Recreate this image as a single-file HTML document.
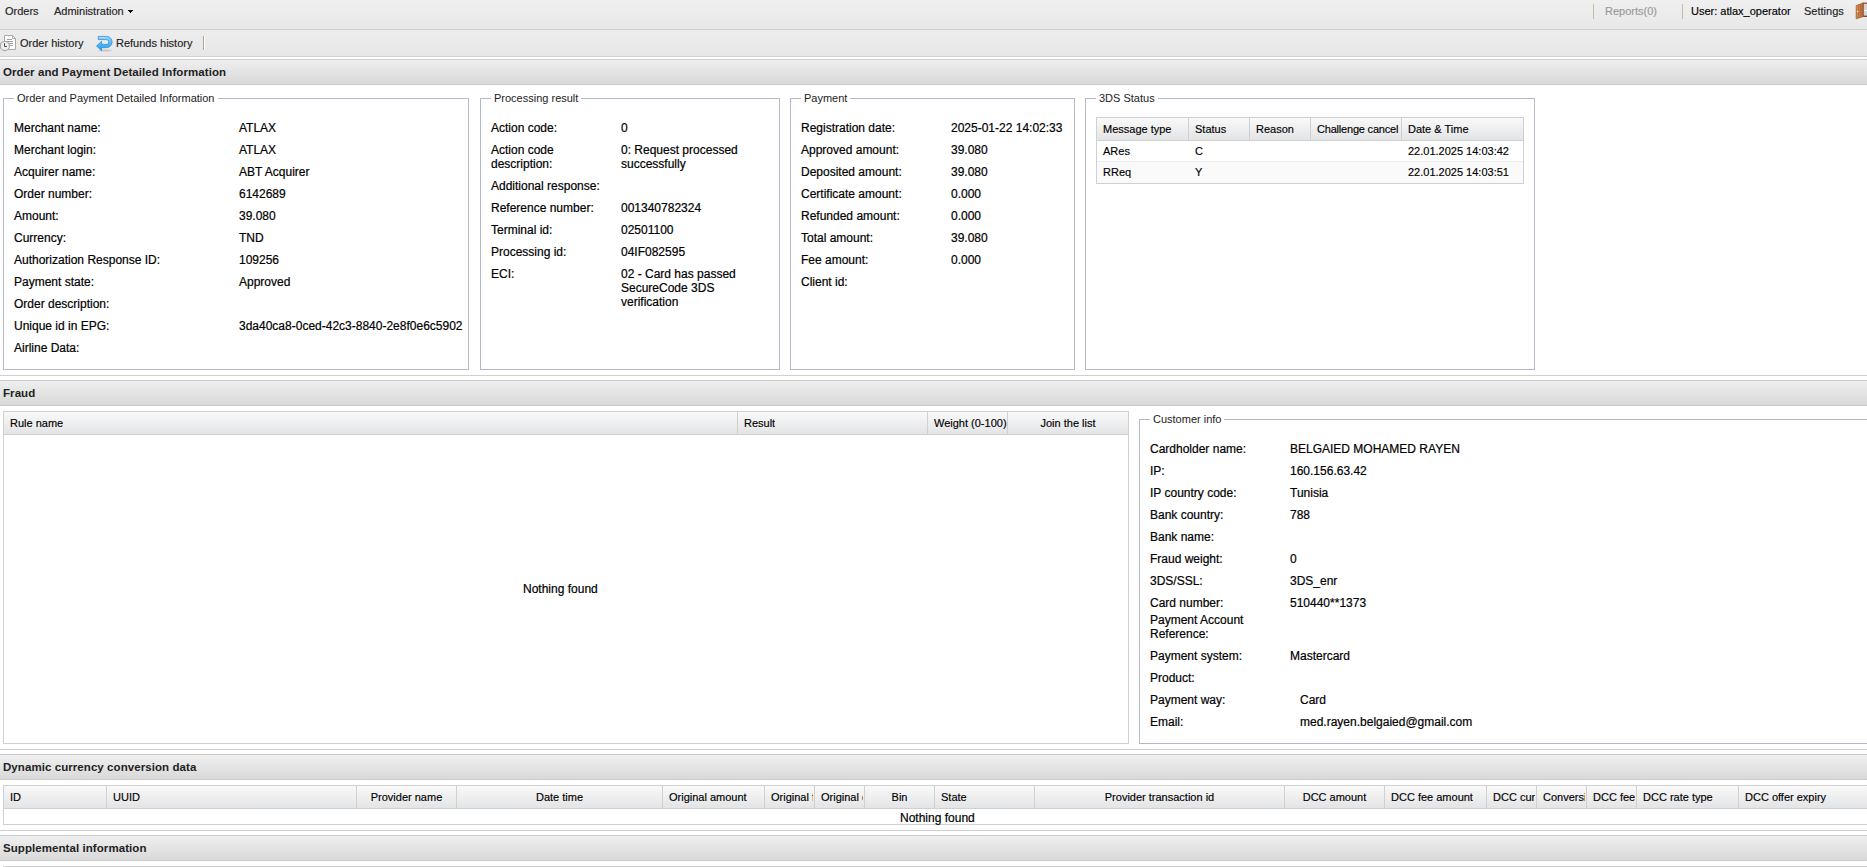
<!DOCTYPE html><html><head><meta charset="utf-8"><title>Order</title><style>
*{margin:0;padding:0;box-sizing:border-box}
html,body{width:1867px;height:867px;overflow:hidden;background:#fff;font-family:"Liberation Sans",sans-serif;color:#000}
.a{position:absolute}
.t11,.t12,.tb,.lg,.gh,.gc{position:absolute;white-space:nowrap;line-height:14px}
.t11{font-size:11px;-webkit-text-stroke:0.15px currentColor}
.t12{font-size:12px;-webkit-text-stroke:0.2px #000}
.tb{font-size:11.5px;font-weight:bold;color:#222;letter-spacing:0.07px}
.lg{font-size:11px;color:#15428b;color:#222;background:#fff;padding:0 3px}
.gh{font-size:11px;color:#000;overflow:hidden;-webkit-text-stroke:0.15px #000}
.gc{font-size:11px;color:#000;-webkit-text-stroke:0.15px #000}
.fs{position:absolute;border:1px solid #b5b8c8}
.ph{position:absolute;left:0;width:1867px;height:26px;border-top:1px solid #cbcbcb;border-bottom:1px solid #cbcbcb;background:linear-gradient(#efefef,#d9d9d9)}
.hl{position:absolute;left:0;width:1867px;height:1px;background:#d0d0d0}
.grid{position:absolute;border:1px solid #d0d0d0;background:#fff}
.ghd{position:absolute;background:linear-gradient(#f9f9f9,#e3e4e6);border-bottom:1px solid #d0d0d0}
.sep{position:absolute;width:1px;background:#d0d0d0}
</style></head><body>
<div class="a" style="left:0px;top:0px;width:1867px;height:29px;background:linear-gradient(#efefef,#e8e8e8)"></div>
<div class="a" style="left:0px;top:29px;width:1867px;height:1px;background:#d0d0d0"></div>
<div class="t11" style="left:5px;top:4px;color:#222">Orders</div>
<div class="t11" style="left:54px;top:4px;color:#222">Administration</div>
<svg class="a" style="left:128px;top:10px" width="5" height="3" shape-rendering="crispEdges"><rect x="0" y="0" width="5" height="1" fill="#000"/><rect x="1" y="1" width="3" height="1" fill="#000"/><rect x="2" y="2" width="1" height="1" fill="#000"/></svg>
<div class="a" style="left:1593px;top:4px;width:1px;height:15px;background:#c4bca8"></div>
<div class="t11" style="left:1605px;top:4px;color:#999">Reports(0)</div>
<div class="a" style="left:1682px;top:4px;width:1px;height:15px;background:#c4bca8"></div>
<div class="t11" style="left:1691px;top:4px;color:#000">User: atlax_operator</div>
<div class="t11" style="left:1804px;top:4px;color:#222">Settings</div>
<svg class="a" style="left:1855px;top:0px" width="12" height="22" viewBox="0 0 12 22">
<defs><linearGradient id="dg" x1="0" y1="0" x2="1" y2="0"><stop offset="0" stop-color="#d98f52"/><stop offset="1" stop-color="#b86a34"/></linearGradient></defs>
<rect x="7.5" y="2.6" width="5" height="14.4" fill="#8e4424"/>
<rect x="8.5" y="3.8" width="4" height="11.8" fill="#cfd4d9"/>
<rect x="9.6" y="9.8" width="3" height="1.3" fill="#fff"/>
<path d="M1.2,5.6 L8.2,3 V16.6 L1.2,18.8 Z" fill="url(#dg)" stroke="#97502a" stroke-width="0.7"/>
<path d="M3.5,5.5V17.5 M5.8,4.7V16.9" stroke="#b0622e" stroke-width="0.6"/>
<circle cx="2.7" cy="11.5" r="0.8" fill="#e8e8e8"/>
</svg>
<div class="a" style="left:0px;top:30px;width:1867px;height:26px;background:linear-gradient(#ededed,#e7e7e7)"></div>
<div class="a" style="left:0px;top:56px;width:1867px;height:1px;background:#cfcfcf"></div>
<svg class="a" style="left:0px;top:34px" width="17" height="18" viewBox="0 0 17 18">
<path d="M4.5,1.5 H12.5 L15.5,4.5 V15.5 H4.5 Z" fill="#fff" stroke="#a8a8a8" stroke-width="1"/>
<path d="M12.5,1.5 V4.5 H15.5" fill="none" stroke="#a8a8a8" stroke-width="1"/>
<path d="M7,5.5H12 M7,7.5H13 M9,9.5H13 M10,11.5H13" stroke="#a0a0a0" stroke-width="1"/>
<circle cx="4.9" cy="11.9" r="4.6" fill="#efefef" stroke="#ababab" stroke-width="1.3"/>
<path d="M4.5,9.3V12.5H6.8" fill="none" stroke="#444" stroke-width="1"/>
</svg>
<div class="t11" style="left:20px;top:36px;color:#222">Order history</div>
<svg class="a" style="left:93px;top:32px" width="24" height="24" viewBox="0 0 24 24">
<defs><linearGradient id="rg" x1="0" y1="0" x2="0" y2="1"><stop offset="0" stop-color="#8cd8ff"/><stop offset="1" stop-color="#12a0f0"/></linearGradient></defs>
<ellipse cx="12" cy="18.5" rx="7" ry="1.2" fill="#000" opacity="0.12"/>
<path d="M5.3,4.4 H13.5 A5.6,5.6 0 0 1 13.5,15.6 H8.6 V18.6 L3.5,14 L8.6,9.3 V12.4 H13.5 A2.4,2.4 0 0 0 13.5,7.6 H5.3 Z" fill="url(#rg)" stroke="#2f86d6" stroke-width="0.75" stroke-linejoin="round"/><path d="M6,5.6H13" stroke="#b8ecff" stroke-width="1" opacity="0.7"/>
</svg>
<div class="t11" style="left:116px;top:36px;color:#222">Refunds history</div>
<div class="a" style="left:203px;top:36px;width:1px;height:14px;background:#aaa494"></div>
<div class="a" style="left:204px;top:36px;width:1px;height:14px;background:#fff"></div>
<div class="ph" style="top:59px"></div>
<div class="tb" style="left:3px;top:65px;">Order and Payment Detailed Information</div>
<div class="fs" style="left:3px;top:98px;width:466px;height:272px"></div>
<div class="lg" style="left:14px;top:91px;">Order and Payment Detailed Information</div>
<div class="t12" style="left:14px;top:121px;">Merchant name:</div>
<div class="t12" style="left:239px;top:121px;">ATLAX</div>
<div class="t12" style="left:14px;top:143px;">Merchant login:</div>
<div class="t12" style="left:239px;top:143px;">ATLAX</div>
<div class="t12" style="left:14px;top:165px;">Acquirer name:</div>
<div class="t12" style="left:239px;top:165px;">ABT Acquirer</div>
<div class="t12" style="left:14px;top:187px;">Order number:</div>
<div class="t12" style="left:239px;top:187px;">6142689</div>
<div class="t12" style="left:14px;top:209px;">Amount:</div>
<div class="t12" style="left:239px;top:209px;">39.080</div>
<div class="t12" style="left:14px;top:231px;">Currency:</div>
<div class="t12" style="left:239px;top:231px;">TND</div>
<div class="t12" style="left:14px;top:253px;">Authorization Response ID:</div>
<div class="t12" style="left:239px;top:253px;">109256</div>
<div class="t12" style="left:14px;top:275px;">Payment state:</div>
<div class="t12" style="left:239px;top:275px;">Approved</div>
<div class="t12" style="left:14px;top:297px;">Order description:</div>
<div class="t12" style="left:14px;top:319px;">Unique id in EPG:</div>
<div class="t12" style="left:239px;top:319px;">3da40ca8-0ced-42c3-8840-2e8f0e6c5902</div>
<div class="t12" style="left:14px;top:341px;">Airline Data:</div>
<div class="fs" style="left:480px;top:98px;width:300px;height:272px"></div>
<div class="lg" style="left:491px;top:91px;">Processing result</div>
<div class="t12" style="left:491px;top:121px;">Action code:</div>
<div class="t12" style="left:621px;top:121px;">0</div>
<div class="t12" style="left:491px;top:143px;">Action code</div>
<div class="t12" style="left:491px;top:157px;">description:</div>
<div class="t12" style="left:621px;top:143px;">0: Request processed</div>
<div class="t12" style="left:621px;top:157px;">successfully</div>
<div class="t12" style="left:491px;top:179px;">Additional response:</div>
<div class="t12" style="left:491px;top:201px;">Reference number:</div>
<div class="t12" style="left:621px;top:201px;">001340782324</div>
<div class="t12" style="left:491px;top:223px;">Terminal id:</div>
<div class="t12" style="left:621px;top:223px;">02501100</div>
<div class="t12" style="left:491px;top:245px;">Processing id:</div>
<div class="t12" style="left:621px;top:245px;">04IF082595</div>
<div class="t12" style="left:491px;top:267px;">ECI:</div>
<div class="t12" style="left:621px;top:267px;">02 - Card has passed</div>
<div class="t12" style="left:621px;top:281px;">SecureCode 3DS</div>
<div class="t12" style="left:621px;top:295px;">verification</div>
<div class="fs" style="left:790px;top:98px;width:285px;height:272px"></div>
<div class="lg" style="left:801px;top:91px;">Payment</div>
<div class="t12" style="left:801px;top:121px;">Registration date:</div>
<div class="t12" style="left:951px;top:121px;">2025-01-22 14:02:33</div>
<div class="t12" style="left:801px;top:143px;">Approved amount:</div>
<div class="t12" style="left:951px;top:143px;">39.080</div>
<div class="t12" style="left:801px;top:165px;">Deposited amount:</div>
<div class="t12" style="left:951px;top:165px;">39.080</div>
<div class="t12" style="left:801px;top:187px;">Certificate amount:</div>
<div class="t12" style="left:951px;top:187px;">0.000</div>
<div class="t12" style="left:801px;top:209px;">Refunded amount:</div>
<div class="t12" style="left:951px;top:209px;">0.000</div>
<div class="t12" style="left:801px;top:231px;">Total amount:</div>
<div class="t12" style="left:951px;top:231px;">39.080</div>
<div class="t12" style="left:801px;top:253px;">Fee amount:</div>
<div class="t12" style="left:951px;top:253px;">0.000</div>
<div class="t12" style="left:801px;top:275px;">Client id:</div>
<div class="fs" style="left:1085px;top:98px;width:450px;height:272px"></div>
<div class="lg" style="left:1096px;top:91px;">3DS Status</div>
<div class="grid" style="left:1096px;top:117px;width:428px;height:67px"></div>
<div class="ghd" style="left:1097px;top:118px;width:426px;height:23px"></div>
<div class="sep" style="left:1188px;top:118px;height:22px"></div>
<div class="sep" style="left:1249px;top:118px;height:22px"></div>
<div class="sep" style="left:1310px;top:118px;height:22px"></div>
<div class="sep" style="left:1401px;top:118px;height:22px"></div>
<div class="a" style="left:1097px;top:161px;width:426px;height:1px;background:#ededed"></div>
<div class="a" style="left:1097px;top:162px;width:426px;height:21px;background:#fafafa"></div>
<div class="gh" style="left:1103px;top:122px;width:84px;letter-spacing:0px">Message type</div>
<div class="gh" style="left:1195px;top:122px;width:53px;letter-spacing:0px">Status</div>
<div class="gh" style="left:1256px;top:122px;width:53px;letter-spacing:0px">Reason</div>
<div class="gh" style="left:1317px;top:122px;width:84px;letter-spacing:-0.2px">Challenge cancel</div>
<div class="gh" style="left:1408px;top:122px;width:114px;letter-spacing:0px">Date &amp; Time</div>
<div class="gc" style="left:1103px;top:144px;">ARes</div>
<div class="gc" style="left:1195px;top:144px;">C</div>
<div class="gc" style="left:1408px;top:144px;">22.01.2025 14:03:42</div>
<div class="gc" style="left:1103px;top:165px;">RReq</div>
<div class="gc" style="left:1195px;top:165px;">Y</div>
<div class="gc" style="left:1408px;top:165px;">22.01.2025 14:03:51</div>
<div class="sep" style="left:1401px;top:118px;height:22px"></div>
<div class="a" style="left:0px;top:375px;width:1867px;height:1px;background:#d0d0d0"></div>
<div class="ph" style="top:380px"></div>
<div class="tb" style="left:3px;top:386px;">Fraud</div>
<div class="grid" style="left:3px;top:411px;width:1126px;height:333px"></div>
<div class="ghd" style="left:4px;top:412px;width:1124px;height:23px"></div>
<div class="sep" style="left:737px;top:412px;height:22px"></div>
<div class="sep" style="left:927px;top:412px;height:22px"></div>
<div class="sep" style="left:1007px;top:412px;height:22px"></div>
<div class="gh" style="left:10px;top:416px;">Rule name</div>
<div class="gh" style="left:744px;top:416px;">Result</div>
<div class="gh" style="left:934px;top:416px;">Weight (0-100)</div>
<div class="gh" style="left:1008px;top:416px;width:120px;text-align:center">Join the list</div>
<div class="t12" style="left:523px;top:582px;">Nothing found</div>
<div class="fs" style="left:1139px;top:419px;width:740px;height:325px"></div>
<div class="lg" style="left:1150px;top:412px;">Customer info</div>
<div class="t12" style="left:1150px;top:442px;">Cardholder name:</div>
<div class="t12" style="left:1290px;top:442px;">BELGAIED MOHAMED RAYEN</div>
<div class="t12" style="left:1150px;top:464px;">IP:</div>
<div class="t12" style="left:1290px;top:464px;">160.156.63.42</div>
<div class="t12" style="left:1150px;top:486px;">IP country code:</div>
<div class="t12" style="left:1290px;top:486px;">Tunisia</div>
<div class="t12" style="left:1150px;top:508px;">Bank country:</div>
<div class="t12" style="left:1290px;top:508px;">788</div>
<div class="t12" style="left:1150px;top:530px;">Bank name:</div>
<div class="t12" style="left:1150px;top:552px;">Fraud weight:</div>
<div class="t12" style="left:1290px;top:552px;">0</div>
<div class="t12" style="left:1150px;top:574px;">3DS/SSL:</div>
<div class="t12" style="left:1290px;top:574px;">3DS_enr</div>
<div class="t12" style="left:1150px;top:596px;">Card number:</div>
<div class="t12" style="left:1290px;top:596px;">510440**1373</div>
<div class="t12" style="left:1150px;top:613px;">Payment Account</div>
<div class="t12" style="left:1150px;top:627px;">Reference:</div>
<div class="t12" style="left:1150px;top:649px;">Payment system:</div>
<div class="t12" style="left:1290px;top:649px;">Mastercard</div>
<div class="t12" style="left:1150px;top:671px;">Product:</div>
<div class="t12" style="left:1150px;top:693px;">Payment way:</div>
<div class="t12" style="left:1300px;top:693px;">Card</div>
<div class="t12" style="left:1150px;top:715px;">Email:</div>
<div class="t12" style="left:1300px;top:715px;">med.rayen.belgaied@gmail.com</div>
<div class="a" style="left:0px;top:749px;width:1867px;height:1px;background:#d0d0d0"></div>
<div class="ph" style="top:754px"></div>
<div class="tb" style="left:3px;top:760px;">Dynamic currency conversion data</div>
<div class="grid" style="left:3px;top:785px;width:1880px;height:40px"></div>
<div class="ghd" style="left:4px;top:786px;width:1870px;height:23px"></div>
<div class="sep" style="left:106px;top:786px;height:22px"></div>
<div class="sep" style="left:356px;top:786px;height:22px"></div>
<div class="sep" style="left:456px;top:786px;height:22px"></div>
<div class="sep" style="left:662px;top:786px;height:22px"></div>
<div class="sep" style="left:764px;top:786px;height:22px"></div>
<div class="sep" style="left:814px;top:786px;height:22px"></div>
<div class="sep" style="left:864px;top:786px;height:22px"></div>
<div class="sep" style="left:934px;top:786px;height:22px"></div>
<div class="sep" style="left:1034px;top:786px;height:22px"></div>
<div class="sep" style="left:1284px;top:786px;height:22px"></div>
<div class="sep" style="left:1384px;top:786px;height:22px"></div>
<div class="sep" style="left:1486px;top:786px;height:22px"></div>
<div class="sep" style="left:1536px;top:786px;height:22px"></div>
<div class="sep" style="left:1586px;top:786px;height:22px"></div>
<div class="sep" style="left:1636px;top:786px;height:22px"></div>
<div class="sep" style="left:1738px;top:786px;height:22px"></div>
<div class="gh" style="left:4px;top:790px;width:101px;padding-left:6px">ID</div>
<div class="gh" style="left:107px;top:790px;width:248px;padding-left:6px">UUID</div>
<div class="gh" style="left:357px;top:790px;width:99px;text-align:center">Provider name</div>
<div class="gh" style="left:457px;top:790px;width:205px;text-align:center">Date time</div>
<div class="gh" style="left:663px;top:790px;width:100px;padding-left:6px">Original amount</div>
<div class="gh" style="left:765px;top:790px;width:48px;padding-left:6px">Original f</div>
<div class="gh" style="left:815px;top:790px;width:48px;padding-left:6px">Original c</div>
<div class="gh" style="left:865px;top:790px;width:69px;text-align:center">Bin</div>
<div class="gh" style="left:935px;top:790px;width:98px;padding-left:6px">State</div>
<div class="gh" style="left:1035px;top:790px;width:249px;text-align:center">Provider transaction id</div>
<div class="gh" style="left:1285px;top:790px;width:99px;text-align:center">DCC amount</div>
<div class="gh" style="left:1385px;top:790px;width:100px;padding-left:6px">DCC fee amount</div>
<div class="gh" style="left:1487px;top:790px;width:48px;padding-left:6px">DCC currency</div>
<div class="gh" style="left:1537px;top:790px;width:48px;padding-left:6px">Conversion</div>
<div class="gh" style="left:1587px;top:790px;width:48px;padding-left:6px">DCC fee</div>
<div class="gh" style="left:1637px;top:790px;width:100px;padding-left:6px">DCC rate type</div>
<div class="gh" style="left:1739px;top:790px;width:150px;padding-left:6px">DCC offer expiry</div>
<div class="t12" style="left:900px;top:811px;">Nothing found</div>
<div class="a" style="left:0px;top:830px;width:1867px;height:1px;background:#d0d0d0"></div>
<div class="ph" style="top:835px"></div>
<div class="tb" style="left:3px;top:841px;">Supplemental information</div>
<div class="grid" style="left:3px;top:866px;width:1880px;height:10px"></div>
</body></html>
